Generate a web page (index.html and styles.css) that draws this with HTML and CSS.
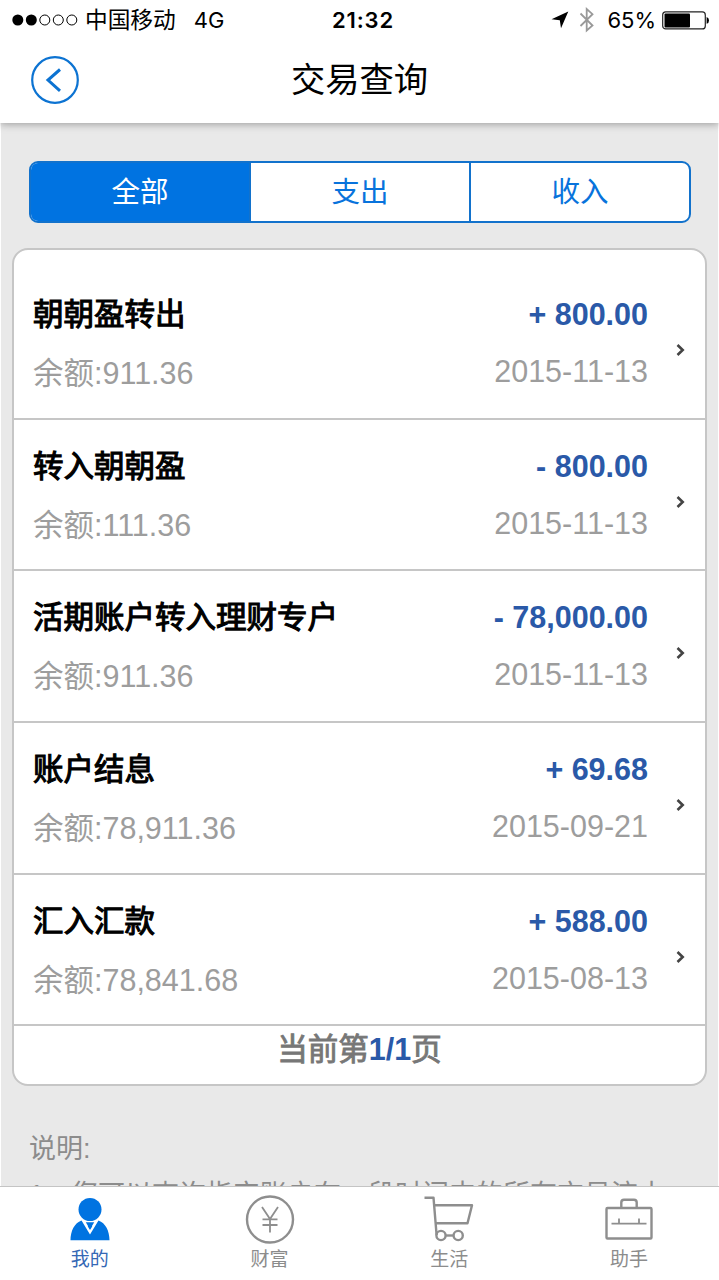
FILE: index.html
```
<!DOCTYPE html>
<html lang="zh-CN">
<head>
    <meta charset="UTF-8">
    <meta name="viewport" content="width=device-width, initial-scale=1.0">
    <title>交易查询</title>
    <link rel="stylesheet" href="styles.css">
</head>
<body>
    <div class="app">
        <div class="status">
            <div class="status-left">
                <svg class="signal" width="68" height="14" viewBox="0 0 68 14">
                    <circle cx="5.8" cy="7" r="5.5"/>
                    <circle cx="19.3" cy="7" r="5.5"/>
                    <circle class="empty" cx="32.8" cy="7" r="5"/>
                    <circle class="empty" cx="46.3" cy="7" r="5"/>
                    <circle class="empty" cx="59.8" cy="7" r="5"/>
                </svg>
                <span class="carrier">中国移动</span>
                <span class="network">4G</span>
            </div>
            <div class="clock">21:32</div>
            <div class="status-right">
                <svg width="18" height="18" viewBox="0 0 18 18"><path d="M17.3 0.6 L0.5 8.2 L8.8 9.2 L10 17.2 Z"/></svg>
                <svg class="bluetooth" width="16" height="26" viewBox="0 0 16 26"><path d="M1.5 6.5 L13.5 18.5 L7.7 23.5 V2 L13.5 7.2 L1.5 19"/></svg>
                <span class="percent">65%</span>
                <svg width="47" height="19" viewBox="0 0 47 19">
                    <rect x="0.7" y="0.9" width="42.6" height="17" rx="3" fill="#fff" stroke="#222" stroke-width="1.2"/>
                    <rect x="2.5" y="2.6" width="25.5" height="13.8" rx="1"/>
                    <path d="M44.6 6 Q47 7 47 9.4 Q47 12 44.6 12.8 Z"/>
                </svg>
            </div>
        </div>
        <header class="header">
            <a class="back" href="#">
                <svg width="48" height="48" viewBox="0 0 48 48"><circle cx="24" cy="24" r="22.8"/><path d="M29 13.5 L17 24 L29 34.8"/></svg>
            </a>
            <h1>交易查询</h1>
        </header>

        <main class="content">
            <div class="tabs">
                <a class="tab active" href="#">全部</a>
                <a class="tab" href="#">支出</a>
                <a class="tab" href="#">收入</a>
            </div>

            <div class="card">
                <div class="row">
                    <div class="info"><div class="name">朝朝盈转出</div><div class="balance">余额:911.36</div></div>
                    <div class="detail"><div class="amount">+ 800.00</div><div class="date">2015-11-13</div></div>
                    <svg class="arrow" width="9" height="12" viewBox="0 0 9 12"><path d="M1.5 1 L6.7 6 L1.5 11"/></svg>
                </div>
                <div class="row">
                    <div class="info"><div class="name">转入朝朝盈</div><div class="balance">余额:111.36</div></div>
                    <div class="detail"><div class="amount">- 800.00</div><div class="date">2015-11-13</div></div>
                    <svg class="arrow" width="9" height="12" viewBox="0 0 9 12"><path d="M1.5 1 L6.7 6 L1.5 11"/></svg>
                </div>
                <div class="row">
                    <div class="info"><div class="name">活期账户转入理财专户</div><div class="balance">余额:911.36</div></div>
                    <div class="detail"><div class="amount">- 78,000.00</div><div class="date">2015-11-13</div></div>
                    <svg class="arrow" width="9" height="12" viewBox="0 0 9 12"><path d="M1.5 1 L6.7 6 L1.5 11"/></svg>
                </div>
                <div class="row">
                    <div class="info"><div class="name">账户结息</div><div class="balance">余额:78,911.36</div></div>
                    <div class="detail"><div class="amount">+ 69.68</div><div class="date">2015-09-21</div></div>
                    <svg class="arrow" width="9" height="12" viewBox="0 0 9 12"><path d="M1.5 1 L6.7 6 L1.5 11"/></svg>
                </div>
                <div class="row">
                    <div class="info"><div class="name">汇入汇款</div><div class="balance">余额:78,841.68</div></div>
                    <div class="detail"><div class="amount">+ 588.00</div><div class="date">2015-08-13</div></div>
                    <svg class="arrow" width="9" height="12" viewBox="0 0 9 12"><path d="M1.5 1 L6.7 6 L1.5 11"/></svg>
                </div>
                <div class="pager">当前第<span>1/1</span>页</div>
            </div>

            <div class="notes">
                <p>说明:</p>
                <p>1、您可以查询指定账户在一段时间内的所有交易流水</p>
            </div>
        </main>

        <nav class="tabbar">
            <a class="item current" href="#">
                <svg width="50" height="50" viewBox="0 0 50 50">
                    <circle cx="25" cy="14.5" r="11.5"/>
                    <path d="M5.5 45.3 C5.5 36 9.5 28 16.5 25.5 L25 39.5 L33.5 25.5 C40.5 28 44.5 36 44.5 45.3 Z"/>
                    <path d="M20.8 27.3 H29.2 L27 31 L27.2 31.5 L25 35 L22.8 31.5 L23 31 Z"/>
                </svg>
                <span>我的</span>
            </a>
            <a class="item" href="#">
                <svg class="line" width="50" height="50" viewBox="0 0 50 50">
                    <circle cx="25" cy="24.5" r="23"/>
                    <path class="thin" d="M17 12 L25 24 L33 12 M25 24 V37.5 M17.5 24.3 H32.5 M17.5 30 H32.5"/>
                </svg>
                <span>财富</span>
            </a>
            <a class="item" href="#">
                <svg class="line" width="50" height="50" viewBox="0 0 50 50">
                    <path d="M0.5 2.7 H9.5 L12.6 40"/>
                    <path d="M10.5 10.2 H48 L43.5 28.2 H12"/>
                    <circle cx="17" cy="40.5" r="4.6"/>
                    <circle cx="34.2" cy="40.5" r="4.6"/>
                    <path d="M21.6 40.5 H29.6"/>
                </svg>
                <span>生活</span>
            </a>
            <a class="item" href="#">
                <svg class="line" width="50" height="50" viewBox="0 0 50 50">
                    <rect x="2.5" y="13" width="45" height="30.5" rx="1"/>
                    <path d="M17.3 13 V7.5 Q17.3 4.8 20 4.8 H30 Q32.7 4.8 32.7 7.5 V13"/>
                    <path class="thin" d="M7.5 28.7 H42.5 M15 23.5 V28.7 M35 23.5 V28.7"/>
                </svg>
                <span>助手</span>
            </a>
        </nav>
    </div>
</body>
</html>
```
FILE: styles.css
```
* { box-sizing: border-box; }
body { margin: 0; background: #fff; font-family: "Liberation Sans", "Noto Sans CJK SC", sans-serif; color: #000; }
a { text-decoration: none; color: inherit; }
svg { display: block; flex: none; }
.app { display: flex; flex-direction: column; width: 719px; height: 1280px; overflow: hidden; }

.status { display: grid; grid-template-columns: 1fr auto 1fr; align-items: center; height: 40px; padding: 0 10px 0 12px; background: #fff; z-index: 2; font-family: Inter, "Noto Sans CJK SC", sans-serif; font-size: 22px; line-height: 40px; }
.status-left, .status-right { display: flex; align-items: center; }
.status-right { justify-content: flex-end; }
.carrier { margin-left: 5px; font-size: 22.7px; }
.network { margin-left: 18px; }
.clock { padding-left: 5px; font-weight: 600; letter-spacing: 0.9px; }
.signal .empty { fill: none; stroke: #000; stroke-width: 1; }
.bluetooth { margin: 0 12px 0 10px; fill: none; stroke: #999; stroke-width: 1.8; }
.percent { margin-right: 6px; }

.header { display: grid; grid-template-columns: 1fr auto 1fr; align-items: center; height: 83px; padding: 0 30px 3px; flex: none; z-index: 1; background: #fff; box-shadow: 0 1px 8px rgba(0,0,0,0.35); }
.header h1 { margin: 0; font-size: 34.3px; font-weight: normal; line-height: 50px; }
.back svg { margin-left: 1px; fill: none; stroke: #0c73d2; stroke-width: 2.2; }
.back path { stroke-width: 3; }

.content { flex: 1; min-height: 0; overflow: hidden; margin: 0 1px; padding: 38px 11px 0; background: #e9e9e9; }
.tabs { display: flex; height: 62px; margin: 0 16px 0 17px; border: 2px solid #1272cc; border-radius: 9px; background: #fff; overflow: hidden; }
.tab { flex: 1; text-align: center; font-size: 28.5px; line-height: 58px; color: #0873dc; }
.tab + .tab { border-left: 2px solid #1272cc; }
.tab.active { background: #0073e1; color: #fff; }

.card { margin-top: 25px; height: 838px; border: 2px solid #c6c6c6; border-radius: 16px; background: #fff; padding-top: 18px; }
.row { display: flex; align-items: center; height: 151.7px; padding: 0 20px 0 19px; border-bottom: 2px solid #c6c6c6; font-size: 30.5px; }
.info { flex: 1; }
.name, .amount { height: 58px; line-height: 58px; }
.name { -webkit-text-stroke: 1.1px #000; }
.amount { font-weight: bold; color: #2a59a8; }
.balance, .date { height: 58px; line-height: 58px; color: #9d9d9d; }
.balance { line-height: 60px; }
.date { line-height: 56px; }
.detail { text-align: right; }
.arrow { margin: 14px 0 0 28px; fill: none; stroke: #444; stroke-width: 2.6; }
.pager { text-align: center; font-size: 30.5px; line-height: 46px; color: #777; -webkit-text-stroke: 0.9px #777; }
.pager span { font-weight: bold; color: #2a59a8; -webkit-text-stroke: 0; }

.notes { margin: 43px 17px 0; font-size: 27px; line-height: 40px; color: #8c8c8c; white-space: nowrap; }
.notes p { margin: 0 0 6px; }

.tabbar { display: flex; flex: none; height: 94px; border-top: 1px solid #c4c4c4; background: #fff; }
.item { flex: 1; display: flex; flex-direction: column; align-items: center; padding-top: 8px; font-size: 19px; line-height: 30px; color: #8c8c8c; }
.item.current { color: #3568b5; }
.item.current svg { fill: #0073e1; }
.line { fill: none; stroke: #8e8e8e; stroke-width: 2.4; stroke-linejoin: round; }
.line .thin { stroke-width: 1.8; }
```
